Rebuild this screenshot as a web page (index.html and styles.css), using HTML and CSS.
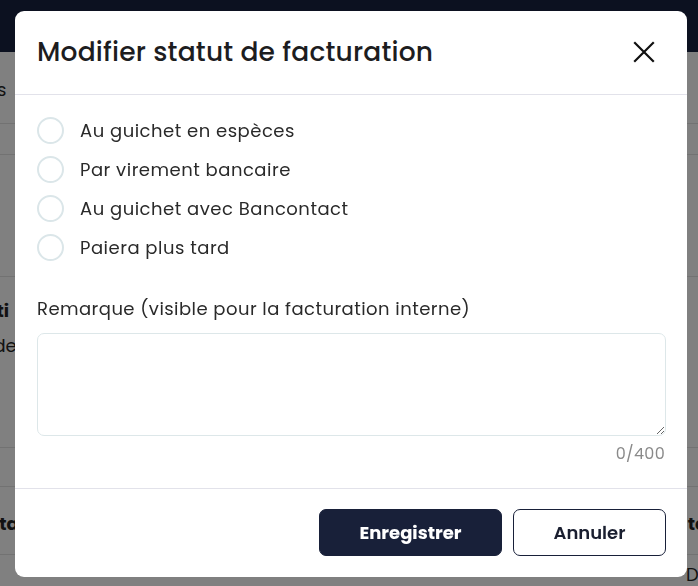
FILE: index.html
```html
<!DOCTYPE html>
<html lang="fr">
<head>
<meta charset="utf-8">
<title>Modifier statut de facturation</title>
<link rel="stylesheet" href="styles.css">
</head>
<body>
<div class="page">
  <div class="topbar"></div>
  <div class="bg-row r1"><span class="bg-left">Actions</span><span class="bg-right">J</span></div>
  <div class="bg-row r2"></div>
  <div class="bg-row r3"></div>
  <div class="bg-row r4"><span class="bg-left bold">Factuti</span><span class="bg-left sub">Code</span></div>
  <div class="bg-row r5"></div>
  <div class="bg-row r6"><span class="bg-left bold">Data</span><span class="bg-right bold">tc</span></div>
  <div class="bg-row r7"><span></span><span class="bg-right">De</span></div>
</div>

<div class="overlay">
  <div class="modal">
    <div class="modal-header">
      <h2 class="modal-title">Modifier statut de facturation</h2>
      <button class="close-btn" aria-label="Fermer">
        <svg width="22" height="22" viewBox="0 0 22 22"><path d="M2 2 L20 20 M20 2 L2 20" stroke="#111" stroke-width="2.2" stroke-linecap="square" fill="none"/></svg>
      </button>
    </div>
    <div class="modal-body">
      <div class="radios">
        <label class="radio"><span class="circle"></span><span class="radio-label">Au guichet en espèces</span></label>
        <label class="radio"><span class="circle"></span><span class="radio-label">Par virement bancaire</span></label>
        <label class="radio"><span class="circle"></span><span class="radio-label">Au guichet avec Bancontact</span></label>
        <label class="radio"><span class="circle"></span><span class="radio-label">Paiera plus tard</span></label>
      </div>
      <div class="field-label">Remarque (visible pour la facturation interne)</div>
      <textarea class="remark"></textarea>
      <div class="counter">0/400</div>
    </div>
    <div class="modal-footer">
      <button class="btn btn-primary">Enregistrer</button>
      <button class="btn btn-secondary">Annuler</button>
    </div>
  </div>
</div>
</body>
</html>
```

FILE: styles.css
```css
* { box-sizing: border-box; }
html, body { margin: 0; padding: 0; }
body {
  width: 698px;
  height: 586px;
  overflow: hidden;
  background: #808080;
  font-family: "Poppins", "Open Sans", "Noto Sans", sans-serif;
}
.page {
  width: 698px;
  height: 586px;
  display: flex;
  flex-direction: column;
  color: #121212;
}
.topbar {
  height: 52px;
  background: #0c1120;
  flex: none;
}
.bg-row {
  display: flex;
  justify-content: space-between;
  align-items: center;
  border-bottom: 1px solid #727272;
  font-size: 18px;
  flex: none;
}
.bg-left { margin-left: -60px; }
.bg-right { margin-right: -10px; }
.bold { font-weight: 700; }
.r1 { height: 72px; padding-top: 4px; }
.r2 { height: 31px; }
.r3 { height: 122px; }
.r4 { height: 171px; flex-direction: column; align-items: flex-start; justify-content: flex-start; padding-top: 20px; gap: 8px; }
.r4 .bg-left { margin-left: -56px; }
.r4 .sub { margin-left: -32px; font-weight: 400; }
.r5 { height: 39px; }
.r6 { height: 68px; padding-top: 6px; }
.r6 .bg-left { margin-left: -26px; }
.r6 .bg-right { margin-right: -8px; }
.r7 { height: 40px; border-bottom: 0; align-items: flex-start; padding-top: 6px; }
.r7 .bg-right { margin-right: -12px; }

.overlay {
  position: fixed;
  inset: 0;
  display: flex;
  justify-content: flex-start;
  align-items: flex-start;
  padding: 11px 11px 0 15px;
}
.modal {
  width: 672px;
  height: 566px;
  background: #fff;
  border-radius: 9px;
  display: flex;
  flex-direction: column;
}
.modal-header {
  height: 84px;
  display: flex;
  align-items: center;
  justify-content: space-between;
  padding: 0 32px 2px 22px;
  border-bottom: 1px solid #e2e2ea;
  flex: none;
}
.modal-title {
  margin: 0;
  font-size: 26.5px;
  font-weight: 500;
  color: #1d1d1f;
  letter-spacing: 0.2px;
}
.close-btn {
  border: 0;
  background: none;
  padding: 0;
  width: 22px;
  height: 22px;
  display: flex;
}
.modal-body {
  padding: 22px 22px 0 22px;
  flex: 1;
  display: flex;
  flex-direction: column;
}
.radios {
  display: flex;
  flex-direction: column;
  gap: 13px;
}
.radio {
  display: flex;
  align-items: center;
  gap: 16px;
  height: 26px;
}
.circle {
  width: 27px;
  height: 27px;
  border: 2px solid #dbe6e9;
  border-radius: 50%;
  flex: none;
}
.radio-label {
  font-size: 18px;
  color: #2a2a2a;
  letter-spacing: 0.5px;
}
.field-label {
  margin-top: 35px;
  font-size: 18px;
  color: #2a2a2a;
  letter-spacing: 0.45px;
}
.remark {
  margin-top: 11px;
  width: 629px;
  height: 103px;
  border: 1px solid #dde7e9;
  border-radius: 7px;
  resize: vertical;
  font-family: inherit;
  display: block;
}
.counter {
  margin-top: 5px;
  text-align: right;
  font-size: 16px;
  color: #8a8a8a;
  letter-spacing: 0.3px;
}
.modal-footer {
  flex: none;
  height: 89px;
  border-top: 1px solid #e2e2ea;
  display: flex;
  justify-content: flex-end;
  align-items: center;
  gap: 11px;
  padding: 0 21px 2px 0;
}
.btn {
  height: 47px;
  border-radius: 7px;
  font-family: inherit;
  font-size: 18px;
  cursor: pointer;
}
.btn-primary {
  width: 183px;
  background: #182039;
  color: #fff;
  border: 1px solid #182039;
  font-weight: 700;
}
.btn-secondary {
  width: 153px;
  background: #fff;
  color: #1a1f30;
  border: 1px solid #182039;
  font-weight: 600;
}
```
